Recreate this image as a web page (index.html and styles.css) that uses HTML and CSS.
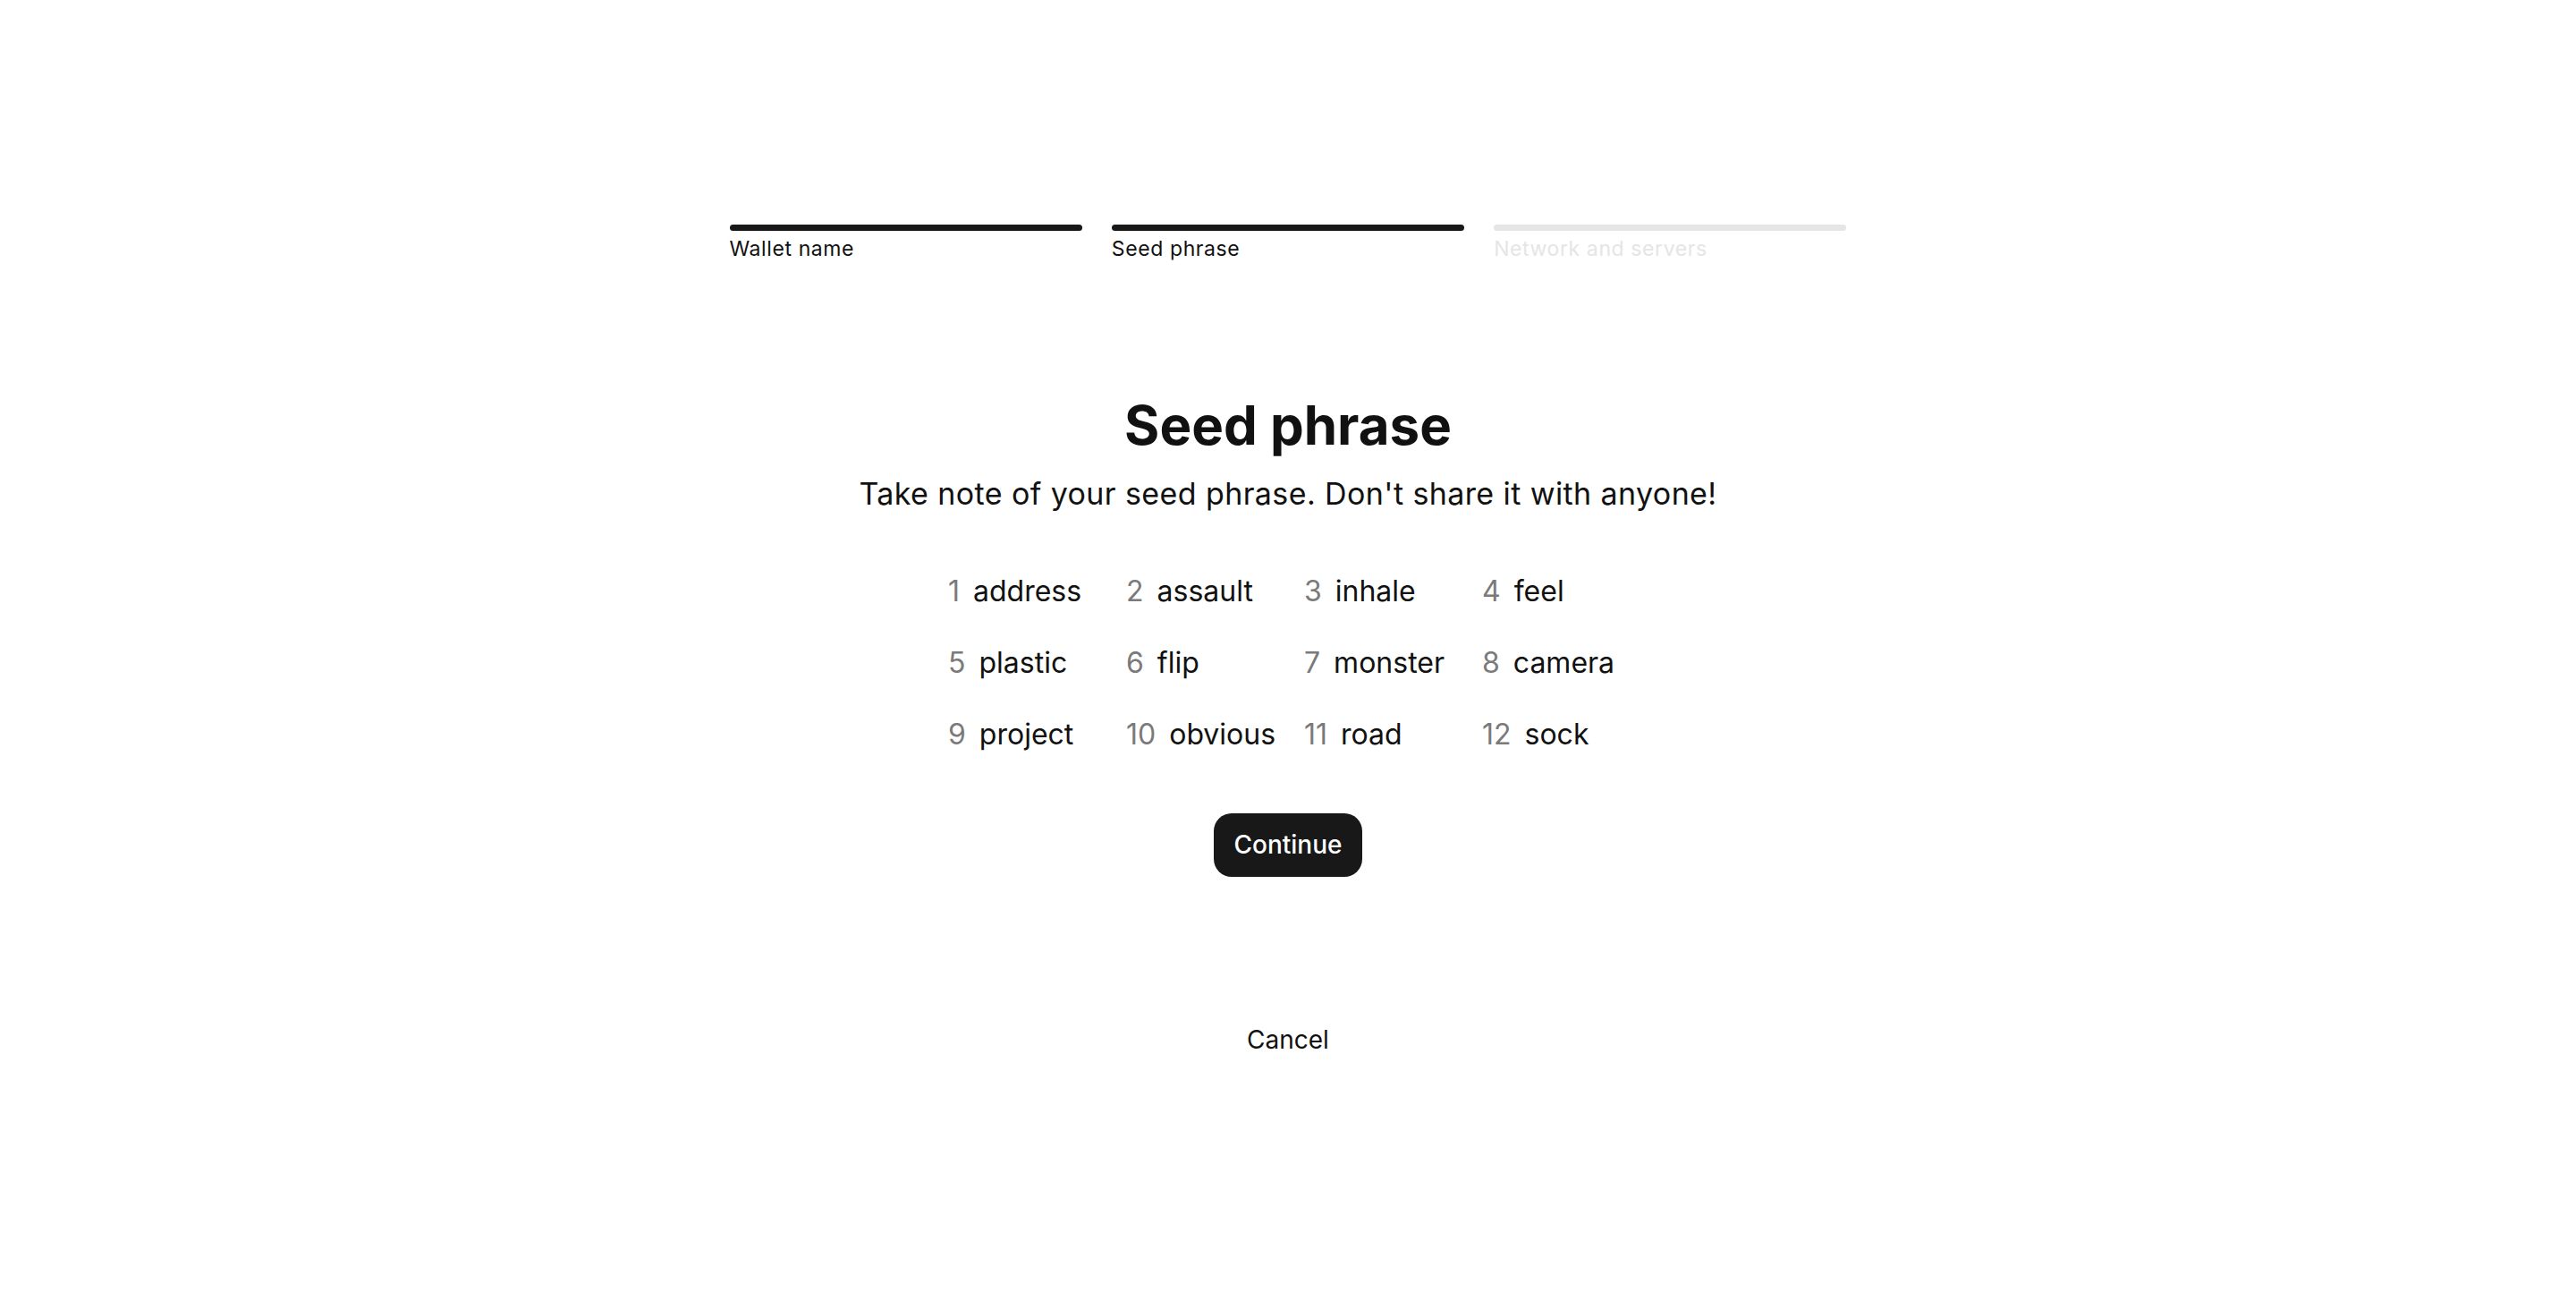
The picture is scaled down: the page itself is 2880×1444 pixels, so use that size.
FILE: index.html
```html
<!DOCTYPE html>
<html lang="en">
<head>
<meta charset="utf-8">
<title>Seed phrase</title>
<link rel="stylesheet" href="styles.css">
</head>
<body>
<main class="page">
  <nav class="steps">
    <div class="step done"><div class="step-bar"></div><div class="step-label">Wallet name</div></div>
    <div class="step done"><div class="step-bar"></div><div class="step-label">Seed phrase</div></div>
    <div class="step"><div class="step-bar"></div><div class="step-label">Network and servers</div></div>
  </nav>

  <h1 class="title">Seed phrase</h1>
  <p class="subtitle">Take note of your seed phrase. Don't share it with anyone!</p>

  <ol class="words">
    <li class="word"><span class="num">1</span><span class="text">address</span></li>
    <li class="word"><span class="num">2</span><span class="text">assault</span></li>
    <li class="word"><span class="num">3</span><span class="text">inhale</span></li>
    <li class="word"><span class="num">4</span><span class="text">feel</span></li>
    <li class="word"><span class="num">5</span><span class="text">plastic</span></li>
    <li class="word"><span class="num">6</span><span class="text">flip</span></li>
    <li class="word"><span class="num">7</span><span class="text">monster</span></li>
    <li class="word"><span class="num">8</span><span class="text">camera</span></li>
    <li class="word"><span class="num">9</span><span class="text">project</span></li>
    <li class="word"><span class="num">10</span><span class="text">obvious</span></li>
    <li class="word"><span class="num">11</span><span class="text">road</span></li>
    <li class="word"><span class="num">12</span><span class="text">sock</span></li>
  </ol>

  <button class="btn-primary" type="button">Continue</button>
  <button class="btn-link" type="button">Cancel</button>
</main>
</body>
</html>
```

FILE: styles.css
```css
* { box-sizing: border-box; }

html, body {
  margin: 0;
  padding: 0;
  background: #ffffff;
}

body {
  font-family: Inter, "Liberation Sans", sans-serif;
  color: #111111;
}

.page {
  display: flex;
  flex-direction: column;
  align-items: center;
  padding-top: 251px;
}

.steps {
  display: flex;
  gap: 33px;
  width: 1249px;
}

.step {
  flex: 1 1 0;
  display: flex;
  flex-direction: column;
  gap: 7px;
}

.step-bar {
  height: 7px;
  border-radius: 4px;
  background: #e5e5e5;
}

.step-label {
  font-size: 23px;
  line-height: 26px;
  letter-spacing: 0.6px;
  color: #e5e5e5;
}

.step.done .step-bar { background: #181818; }
.step.done .step-label { color: #111111; }

.title {
  margin: 149px 0 0;
  font-size: 60px;
  line-height: 70px;
  font-weight: 700;
  color: #111111;
}

.subtitle {
  margin: 22px 0 0;
  font-size: 34px;
  line-height: 40px;
  letter-spacing: 0.4px;
  color: #111111;
}

.words {
  list-style: none;
  margin: 69px 0 0;
  padding: 0 0 0 36px;
  display: grid;
  grid-template-columns: repeat(4, 199px);
  row-gap: 40px;
}

.word {
  display: flex;
  gap: 15px;
  font-size: 32px;
  line-height: 40px;
}

.num { color: #7a7a7a; }
.text { color: #111111; }

.btn-primary {
  margin-top: 68px;
  padding: 20px 22px;
  border: 0;
  border-radius: 20px;
  background: #181818;
  color: #ffffff;
  font-family: inherit;
  font-size: 28px;
  line-height: 31px;
  font-weight: 500;
  cursor: pointer;
}

.btn-link {
  margin-top: 165px;
  padding: 0;
  border: 0;
  background: transparent;
  color: #111111;
  font-family: inherit;
  font-size: 28px;
  line-height: 34px;
  cursor: pointer;
}
```
